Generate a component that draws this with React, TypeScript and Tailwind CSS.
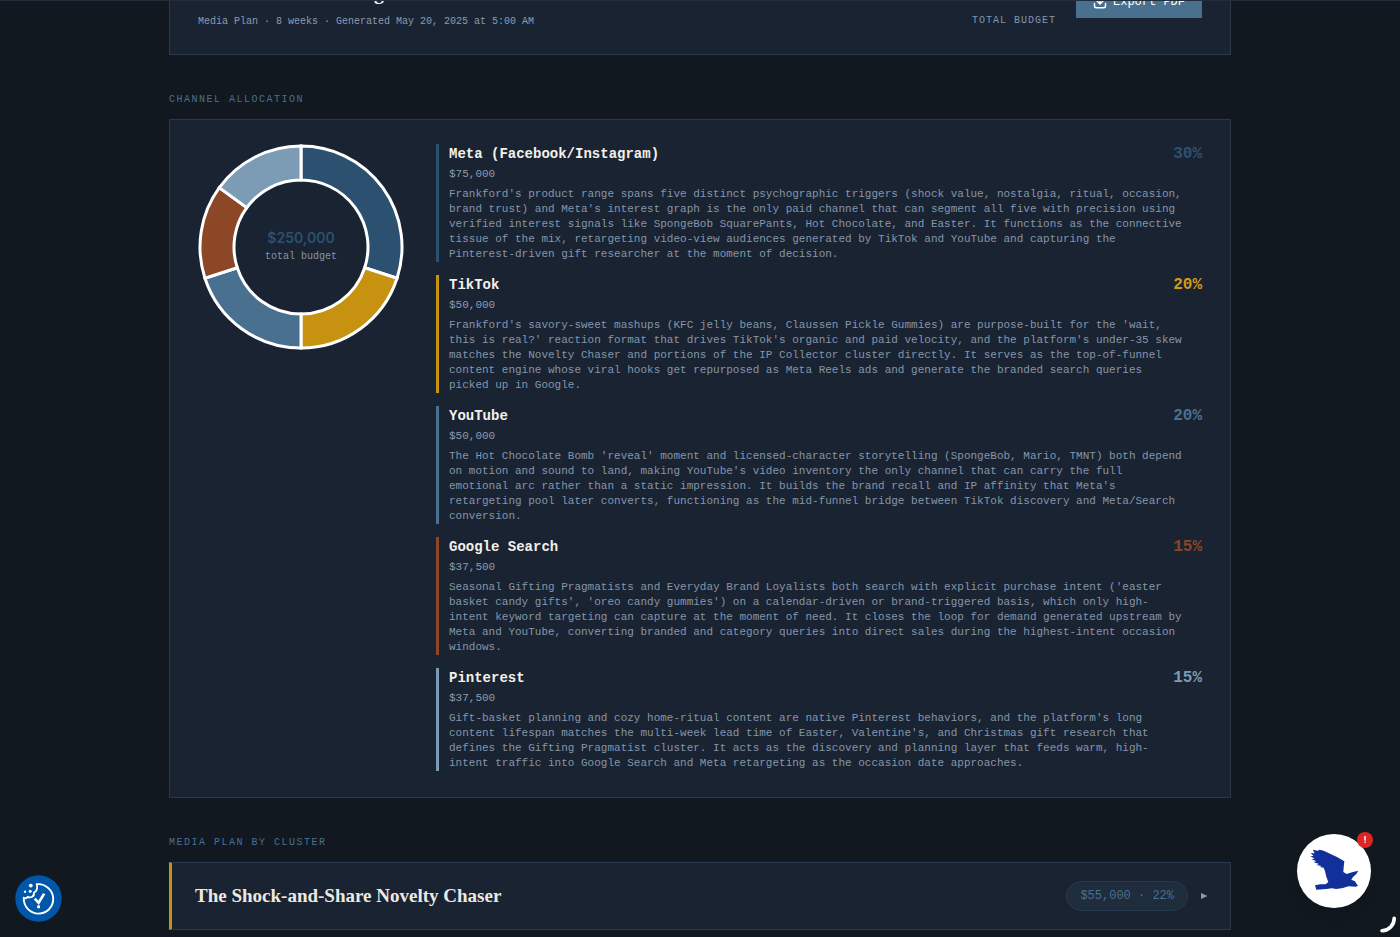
import React from "react";

const MONO = "font-['Liberation_Mono',monospace]";

type Channel = {
  name: string;
  amount: string;
  percent: number;
  bar: string;
  text: string;
  fill: string;
  rationale: string;
};

const channels: Channel[] = [
  {
    name: "Meta (Facebook/Instagram)",
    amount: "$75,000",
    percent: 30,
    bar: "border-[#2c5170]",
    text: "text-[#2c5170]",
    fill: "#2c5170",
    rationale:
      "Frankford's product range spans five distinct psychographic triggers (shock value, nostalgia, ritual, occasion, brand trust) and Meta's interest graph is the only paid channel that can segment all five with precision using verified interest signals like SpongeBob SquarePants, Hot Chocolate, and Easter. It functions as the connective tissue of the mix, retargeting video-view audiences generated by TikTok and YouTube and capturing the Pinterest-driven gift researcher at the moment of decision.",
  },
  {
    name: "TikTok",
    amount: "$50,000",
    percent: 20,
    bar: "border-[#c69214]",
    text: "text-[#d49b17]",
    fill: "#c69210",
    rationale:
      "Frankford's savory-sweet mashups (KFC jelly beans, Claussen Pickle Gummies) are purpose-built for the 'wait, this is real?' reaction format that drives TikTok's organic and paid velocity, and the platform's under-35 skew matches the Novelty Chaser and portions of the IP Collector cluster directly. It serves as the top-of-funnel content engine whose viral hooks get repurposed as Meta Reels ads and generate the branded search queries picked up in Google.",
  },
  {
    name: "YouTube",
    amount: "$50,000",
    percent: 20,
    bar: "border-[#4a7090]",
    text: "text-[#4a7090]",
    fill: "#4a7090",
    rationale:
      "The Hot Chocolate Bomb 'reveal' moment and licensed-character storytelling (SpongeBob, Mario, TMNT) both depend on motion and sound to land, making YouTube's video inventory the only channel that can carry the full emotional arc rather than a static impression. It builds the brand recall and IP affinity that Meta's retargeting pool later converts, functioning as the mid-funnel bridge between TikTok discovery and Meta/Search conversion.",
  },
  {
    name: "Google Search",
    amount: "$37,500",
    percent: 15,
    bar: "border-[#8b4726]",
    text: "text-[#8b4726]",
    fill: "#8b4726",
    rationale:
      "Seasonal Gifting Pragmatists and Everyday Brand Loyalists both search with explicit purchase intent ('easter basket candy gifts', 'oreo candy gummies') on a calendar-driven or brand-triggered basis, which only high-intent keyword targeting can capture at the moment of need. It closes the loop for demand generated upstream by Meta and YouTube, converting branded and category queries into direct sales during the highest-intent occasion windows.",
  },
  {
    name: "Pinterest",
    amount: "$37,500",
    percent: 15,
    bar: "border-[#7b9cb4]",
    text: "text-[#7b9cb4]",
    fill: "#7b9cb4",
    rationale:
      "Gift-basket planning and cozy home-ritual content are native Pinterest behaviors, and the platform's long content lifespan matches the multi-week lead time of Easter, Valentine's, and Christmas gift research that defines the Gifting Pragmatist cluster. It acts as the discovery and planning layer that feeds warm, high-intent traffic into Google Search and Meta retargeting as the occasion date approaches.",
  },
];

function slicePath(start: number, end: number) {
  const c = 103;
  const outer = 101;
  const inner = 67;
  const at = (r: number, pct: number) => {
    const a = (pct / 100) * Math.PI * 2 - Math.PI / 2;
    return `${(c + r * Math.cos(a)).toFixed(2)} ${(c + r * Math.sin(a)).toFixed(2)}`;
  };
  return `M${at(outer, start)}A${outer} ${outer} 0 0 1 ${at(outer, end)}L${at(inner, end)}A${inner} ${inner} 0 0 0 ${at(inner, start)}Z`;
}

function Donut() {
  let total = 0;
  return (
    <svg viewBox="0 0 206 206" className="size-[206px] shrink-0" role="img" aria-label="Channel allocation">
      {channels.map((c) => {
        const start = total;
        total += c.percent;
        return <path key={c.name} d={slicePath(start, total)} fill={c.fill} stroke="#fff" strokeWidth="3" />;
      })}
      <text x="103" y="99" textAnchor="middle" className="fill-[#2c5170] font-['Inter',sans-serif] text-[14px] font-semibold">
        $250,000
      </text>
      <text x="103" y="115" textAnchor="middle" className="fill-[#8496aa] font-['Liberation_Mono',monospace] text-[10px]">
        total budget
      </text>
    </svg>
  );
}

function SectionLabel({ children }: { children: React.ReactNode }) {
  return (
    <h2 className="mt-[37px] mb-[11px] text-[10px] leading-4 tracking-[0.15em] text-[#4a7090] uppercase">{children}</h2>
  );
}

function ChannelRow({ channel }: { channel: Channel }) {
  return (
    <li className={`border-l-3 pl-2.5 ${channel.bar}`}>
      <div className="flex items-center justify-between leading-5 font-bold">
        <h3 className="text-[14px] text-[#f3f1ea]">{channel.name}</h3>
        <span className={`text-[16px] ${channel.text}`}>{channel.percent}%</span>
      </div>
      <p className="text-[11px] leading-5 text-[#8c9bb0]">{channel.amount}</p>
      <p className="mt-[3px] max-w-[111ch] text-[11px] leading-[15px] text-[#8496aa]">{channel.rationale}</p>
    </li>
  );
}

function DownloadIcon() {
  return (
    <svg viewBox="0 0 14 14" className="size-3.5" fill="none" stroke="currentColor" strokeWidth="1.4" strokeLinecap="round" strokeLinejoin="round">
      <path d="M1.500 8.500v2.500a1.800 1.800 0 0 0 1.800 1.800h7.400a1.800 1.800 0 0 0 1.800-1.800V8.500M7 1v7.500M4 6l3 3 3-3" />
    </svg>
  );
}

function CookieButton() {
  return (
    <button type="button" aria-label="Cookie settings" className="fixed bottom-[15px] left-[15px] size-[47px] cursor-pointer">
      <svg viewBox="0 0 47 47" className="size-full">
        <circle cx="23.5" cy="23.5" r="23.2" fill="#0056a8" />
        <path
          d="M21.6 9.2C29.8 8.2 38 14.6 38.2 23.6C38.4 32 31.8 38.6 23.6 38.6C15.2 38.6 8.6 32 8.7 22.8C10.4 23.8 12.2 23.2 12.6 21.8C15.8 23.4 19.6 21.4 18.9 17.6C21.9 16.6 22.9 12.2 21.6 9.2Z"
          fill="none"
          stroke="#fff"
          strokeWidth="1.9"
          strokeLinejoin="round"
        />
        <path d="M19.8 23.6L23.6 27.8L29.2 18.6" fill="none" stroke="#fff" strokeWidth="2.6" />
        <rect x="22.2" y="30.4" width="2.8" height="2.8" fill="#fff" />
        <circle cx="15.8" cy="10.6" r="1.9" fill="#fff" />
        <circle cx="10" cy="16.8" r="1.2" fill="#fff" />
        <circle cx="15.2" cy="16.2" r="1.5" fill="#fff" />
      </svg>
    </button>
  );
}

function ChatButton() {
  return (
    <button type="button" aria-label="Open chat" className="fixed right-[29px] bottom-[29px] size-[74px] cursor-pointer rounded-full bg-white shadow-lg">
      <svg viewBox="0 0 222 222" className="size-full" fill="#11309a">
        <path d="M47 47L62 50L68 47L80 50L96 58L120 69L142 82L140 100L139 114L149 120L165 115L184 110L178 120L168 129L163 137L174 142L179 150L183 155L176 158L154 157L138 162L118 165L104 163L88 165L58 167L54 154L70 151L86 151L94 144L88 128L84 112L80 101L68 99L74 96L58 93L66 90L49 84L58 82L43 75L53 74L40 66L50 66L41 57L53 58Z" />
      </svg>
      <span className="absolute -top-[2px] -right-[2px] flex size-4 items-center justify-center rounded-full bg-[#dc2626] font-['Inter',sans-serif] text-[9px] font-bold text-white">
        !
      </span>
    </button>
  );
}

export default function App() {
  return (
    <div className={`h-screen overflow-hidden border-t border-[#242e3a] bg-[#111820] ${MONO}`}>
      <main className="mx-auto -mt-[58px] max-w-[1120px] px-[29px]">
        <header className="flex items-center justify-between border border-[#2a3a4c] bg-[#1a2332] px-7 pt-7 pb-[22px]">
          <div>
            <h1 className="font-['Liberation_Serif',serif] text-[20px] leading-10 font-bold text-[#f3f1ea]">Frankford Marketing</h1>
            <p className="text-[10px] leading-5 text-[#8c9bb0]">Media Plan · 8 weeks · Generated May 20, 2025 at 5:00 AM</p>
          </div>
          <div className="flex items-center gap-5">
            <div className="text-right">
              <p className="text-[22px] leading-[38px] font-bold text-[#4a7090]">$250,000</p>
              <p className="text-[10px] leading-5 tracking-widest text-[#8496aa]">TOTAL BUDGET</p>
            </div>
            <button type="button" className="flex cursor-pointer items-center gap-1.5 bg-[#4a7090] px-[17px] py-1.5 text-[12px] leading-5 text-white">
              <DownloadIcon />
              Export PDF
            </button>
          </div>
        </header>

        <SectionLabel>Channel Allocation</SectionLabel>
        <section className="flex items-start gap-8 border border-[#2a3a4c] bg-[#1a2332] px-7 pt-6 pb-[26px]">
          <Donut />
          <ul className="flex min-w-0 flex-1 flex-col gap-[13px]">
            {channels.map((c) => (
              <ChannelRow key={c.name} channel={c} />
            ))}
          </ul>
        </section>

        <SectionLabel>Media Plan by Cluster</SectionLabel>
        <section className="border border-l-3 border-[#2a3a4c] border-l-[#c69214] bg-[#1a2332]">
          <button type="button" aria-expanded="false" className="flex w-full cursor-pointer items-center justify-between py-[18px] pr-[22px] pl-[23px] text-left">
            <span className="font-['Liberation_Serif',serif] text-[19px] leading-6 font-bold text-[#ece9e2]">The Shock-and-Share Novelty Chaser</span>
            <span className="flex items-center gap-3">
              <span className="rounded-full border border-[#263c4e] bg-[#1e2c3b] px-[13px] py-1 text-[12px] leading-5 text-[#4a7090]">$55,000 · 22%</span>
              <svg viewBox="0 0 8 8" className="size-2" fill="#8c9bb0">
                <path d="M1 1L7.5 4L1 7Z" />
              </svg>
            </span>
          </button>
        </section>
      </main>

      <CookieButton />
      <ChatButton />
      <svg viewBox="0 0 20 20" className="fixed right-[2px] bottom-[2px] size-5" fill="none" stroke="#fff" strokeWidth="3.6" strokeLinecap="round">
        <path d="M16.2 3.2A12.5 12.5 0 0 1 4 15.8" />
      </svg>
    </div>
  );
}
